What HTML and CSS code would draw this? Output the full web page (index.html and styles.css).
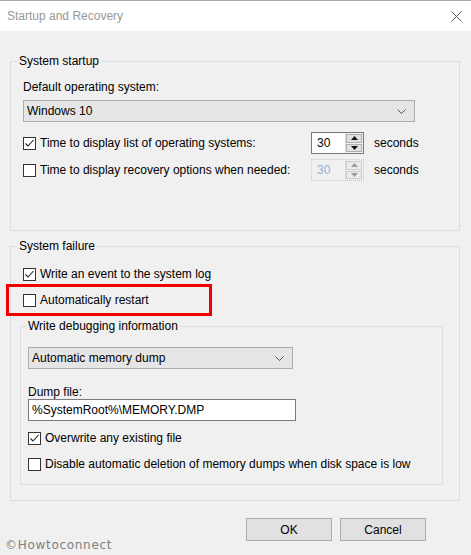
FILE: index.html
```html
<!DOCTYPE html>
<html lang="en">
<head>
<meta charset="utf-8">
<title>Startup and Recovery</title>
<link rel="stylesheet" href="styles.css">
</head>
<body>
<div class="titlebar">
  <span class="title">Startup and Recovery</span>
  <svg class="close" width="11" height="11" viewBox="0 0 11 11"><path d="M0.5 0.5 L10.5 10.5 M10.5 0.5 L0.5 10.5" stroke="#5a5a5a" stroke-width="1" fill="none"/></svg>
</div>
<div class="content">
  <fieldset class="group startup">
    <legend>System startup</legend>
    <div class="inner">
      <div class="label">Default operating system:</div>
      <div class="combo combo-os"><span>Windows 10</span>
        <svg class="chev" width="9" height="5" viewBox="0 0 9 5"><path d="M0.5 0.5 L4.5 4.5 L8.5 0.5" stroke="#555" stroke-width="1" fill="none"/></svg>
      </div>
      <div class="spin-row first">
        <div class="check">
          <span class="box"><svg width="11" height="11" viewBox="0 0 11 11"><path d="M1.5 5.5 L4 8 L9.5 2" stroke="#222" stroke-width="1.1" fill="none"/></svg></span>
          <span>Time to display list of operating systems:</span>
        </div>
        <div class="spin">
          <span class="spin-value">30</span>
          <span class="spin-btns">
            <span class="spin-btn"><svg width="7" height="4" viewBox="0 0 7 4"><path d="M0 4 L3.5 0 L7 4 Z" fill="#111"/></svg></span>
            <span class="spin-btn"><svg width="7" height="4" viewBox="0 0 7 4"><path d="M0 0 L3.5 4 L7 0 Z" fill="#111"/></svg></span>
          </span>
        </div>
        <span class="unit">seconds</span>
      </div>
      <div class="spin-row">
        <div class="check">
          <span class="box"></span>
          <span>Time to display recovery options when needed:</span>
        </div>
        <div class="spin disabled">
          <span class="spin-value">30</span>
          <span class="spin-btns">
            <span class="spin-btn"><svg width="7" height="4" viewBox="0 0 7 4"><path d="M0 4 L3.5 0 L7 4 Z" fill="#9a9a9a"/></svg></span>
            <span class="spin-btn"><svg width="7" height="4" viewBox="0 0 7 4"><path d="M0 0 L3.5 4 L7 0 Z" fill="#9a9a9a"/></svg></span>
          </span>
        </div>
        <span class="unit">seconds</span>
      </div>
    </div>
  </fieldset>

  <fieldset class="group failure">
    <legend>System failure</legend>
    <div class="inner">
      <div class="check row-event">
        <span class="box"><svg width="11" height="11" viewBox="0 0 11 11"><path d="M1.5 5.5 L4 8 L9.5 2" stroke="#222" stroke-width="1.1" fill="none"/></svg></span>
        <span>Write an event to the system log</span>
      </div>
      <div class="check row-restart highlighted">
        <span class="box"></span>
        <span>Automatically restart</span>
      </div>
      <fieldset class="group debug">
        <legend>Write debugging information</legend>
        <div class="inner">
          <div class="combo combo-dump"><span>Automatic memory dump</span>
            <svg class="chev" width="9" height="5" viewBox="0 0 9 5"><path d="M0.5 0.5 L4.5 4.5 L8.5 0.5" stroke="#555" stroke-width="1" fill="none"/></svg>
          </div>
          <div class="label dump-label">Dump file:</div>
          <div class="textbox">%SystemRoot%\MEMORY.DMP</div>
          <div class="check row-overwrite">
            <span class="box"><svg width="11" height="11" viewBox="0 0 11 11"><path d="M1.5 5.5 L4 8 L9.5 2" stroke="#222" stroke-width="1.1" fill="none"/></svg></span>
            <span>Overwrite any existing file</span>
          </div>
          <div class="check row-disable">
            <span class="box"></span>
            <span>Disable automatic deletion of memory dumps when disk space is low</span>
          </div>
        </div>
      </fieldset>
    </div>
  </fieldset>
</div>
<div class="footer">
  <span class="watermark">©Howtoconnect</span>
  <div class="buttons">
    <span class="btn">OK</span>
    <span class="btn">Cancel</span>
  </div>
</div>
</body>
</html>
```
FILE: styles.css
```css
*, *::before, *::after { box-sizing: border-box; }
html, body { margin: 0; padding: 0; }
body {
  width: 471px;
  height: 555px;
  overflow: hidden;
  background: #f0f0f0;
  font-family: "Liberation Sans", Arial, sans-serif;
  font-size: 12px;
  line-height: 16px;
  color: #000;
}
.titlebar {
  height: 31px;
  background: #fff;
  border-top: 1px solid #a9a9a9;
  display: flex;
  align-items: center;
  justify-content: space-between;
  padding: 0 9px 0 7px;
}
.title { color: #999; }
.close { display: block; }

.content { padding: 22px 11px 0 10px; }

fieldset.group {
  margin: 0;
  padding: 0;
  min-width: 0;
  border: 1px solid #dcdcdc;
}
fieldset.group > legend {
  padding: 0 2px;
  margin-left: 6px;
  line-height: 16px;
}
.startup > .inner { padding: 10px 0 49px 12px; }
fieldset.failure { margin-top: 7px; }
.failure > .inner { padding: 12px 16px 15px 12px; }
fieldset.debug { margin: 10px 0 0 -3px; }
fieldset.debug > legend { margin-left: 5px; }
.debug > .inner { padding: 13px 0 12px 7px; }

.label { height: 16px; }

.combo {
  height: 22px;
  background: #e5e5e5;
  border: 1px solid #adadad;
  display: flex;
  align-items: center;
  justify-content: space-between;
  padding: 0 8px 0 3px;
}
.combo-os { width: 392px; margin-top: 5px; }
.combo-dump { width: 265px; }
.chev { display: block; }

.spin-row {
  display: flex;
  align-items: center;
  height: 22px;
  margin-top: 5px;
}
.spin-row.first { margin-top: 10px; }
.spin-row .check { width: 288px; }

.check {
  display: flex;
  align-items: center;
  height: 16px;
  white-space: nowrap;
}
.box {
  flex: none;
  width: 13px;
  height: 13px;
  border: 1px solid #333;
  background: #fff;
  margin-right: 4px;
  display: flex;
  align-items: center;
  justify-content: center;
}
.box svg { display: block; }

.spin {
  width: 53px;
  height: 22px;
  display: flex;
  border: 1px solid #7a7a7a;
  background: #fff;
}
.spin-value {
  flex: 1;
  padding-left: 5px;
  line-height: 20px;
}
.spin-btns {
  width: 18px;
  background: #f0f0f0;
  border-left: 1px solid #dadada;
  padding: 1px 1px 1px 0;
  display: flex;
  flex-direction: column;
  gap: 1px;
}
.spin-btn {
  flex: 1;
  background: #e1e1e1;
  border: 1px solid #b0b0b0;
  display: flex;
  align-items: center;
  justify-content: center;
}
.spin-btn svg { display: block; }
.spin.disabled {
  border: 1px dotted #c8c8c8;
  background: #f0f0f0;
}
.spin.disabled .spin-value { color: #8fb0d4; }
.spin.disabled .spin-btn { background: #ececec; border-color: #cccccc; }
.unit { margin-left: 10px; }

.row-restart { margin-top: 10px; }
.highlighted { position: relative; }
.highlighted::after {
  content: "";
  position: absolute;
  left: -17px;
  top: -8px;
  width: 206px;
  height: 32px;
  border: 3px solid #f00000;
}

.dump-label { margin-top: 15px; height: 15px; }
.textbox {
  width: 268px;
  height: 22px;
  background: #fff;
  border: 1px solid #7a7a7a;
  padding-left: 3px;
  line-height: 20px;
}
.row-overwrite { margin-top: 9px; }
.row-disable { margin-top: 10px; }

.footer {
  height: 54px;
  display: flex;
  justify-content: space-between;
  align-items: flex-start;
  padding: 17px 45px 0 5px;
}
.watermark {
  margin-top: 19px;
  font-family: "DejaVu Sans", Verdana, sans-serif;
  font-size: 12px;
  letter-spacing: 0.7px;
  color: #808080;
}
.buttons { display: flex; gap: 8px; }
.btn {
  width: 86px;
  height: 23px;
  background: #e1e1e1;
  border: 1px solid #adadad;
  display: flex;
  align-items: center;
  justify-content: center;
}
```
